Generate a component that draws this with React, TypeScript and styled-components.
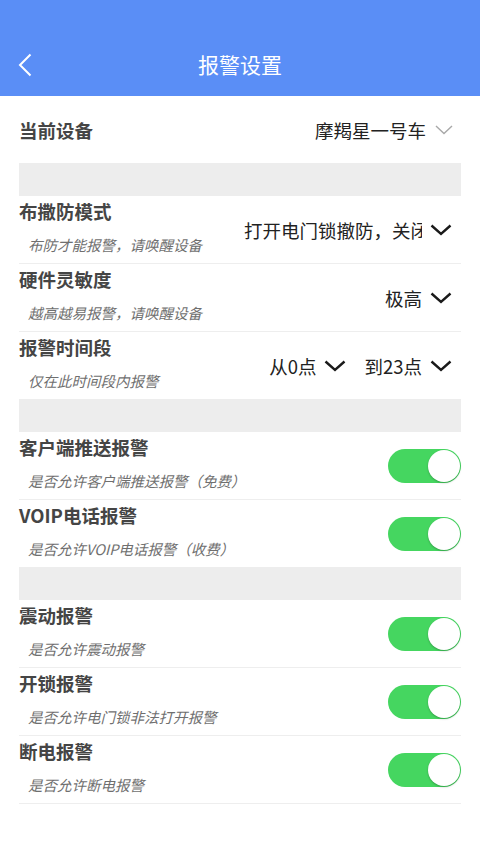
import React, { useState } from 'react';
import styled, { createGlobalStyle } from 'styled-components';

const GlobalStyle = createGlobalStyle`
  body {
    margin: 0;
    background: #ffffff;
    font-family: "Noto Sans CJK SC", "Noto Sans", sans-serif;
  }
`;

const Page = styled.div`
  width: 480px;
  min-height: 853px;
  background: #ffffff;
`;

const Header = styled.div`
  height: 96px;
  background-color: #5a8ef6;
  display: flex;
  align-items: flex-end;
  justify-content: center;
`;

const HeaderBar = styled.div`
  height: 64px;
  width: 100%;
  display: flex;
  align-items: center;
  justify-content: center;
  position: relative;
`;

const BackButton = styled.div`
  position: absolute;
  left: 18px;
  top: 20px;
  width: 18px;
  height: 26px;
  display: flex;
  align-items: center;
`;

const Title = styled.div`
  color: #ffffff;
  font-size: 21px;
  line-height: 28px;
`;

const Content = styled.div`
  padding: 0 19px;
`;

const Row = styled.div<{ $last?: boolean }>`
  height: 67px;
  display: flex;
  align-items: center;
  justify-content: space-between;
  border-bottom: ${(p) => (p.$last ? 'none' : '1px solid #eeeeee')};
`;

const Band = styled.div`
  height: 33px;
  background-color: #ededed;
`;

const LeftCol = styled.div`
  display: flex;
  flex-direction: column;
  align-self: stretch;
  padding-top: 2px;
`;

const Label = styled.div`
  font-size: 18.5px;
  line-height: 26px;
  font-weight: 700;
  color: #454545;
`;

const Sub = styled.div`
  font-size: 14.5px;
  line-height: 20px;
  color: #6f6f6f;
  font-style: italic;
  margin-top: 11px;
  padding-left: 9px;
`;

const RightGroup = styled.div`
  display: flex;
  align-items: center;
  gap: 18px;
  padding-right: 9px;
`;

const Picker = styled.div`
  display: flex;
  align-items: center;
  gap: 8px;
`;

const ValueText = styled.div<{ $max?: number }>`
  font-size: 18.5px;
  line-height: 26px;
  color: #222222;
  white-space: nowrap;
  overflow: hidden;
  max-width: ${(p) => (p.$max ? `${p.$max}px` : 'none')};
`;

const SwitchTrack = styled.button<{ $on: boolean }>`
  width: 73px;
  height: 34px;
  border-radius: 17px;
  border: none;
  padding: 0;
  background-color: ${(p) => (p.$on ? '#45d660' : '#e5e5e5')};
  position: relative;
  cursor: pointer;
  transition: background-color 0.2s;
`;

const SwitchKnob = styled.span<{ $on: boolean }>`
  position: absolute;
  top: 1px;
  left: ${(p) => (p.$on ? '40px' : '1px')};
  width: 32px;
  height: 32px;
  border-radius: 50%;
  background: #ffffff;
  box-shadow: 0 1px 2px rgba(0, 0, 0, 0.25);
  transition: left 0.2s;
`;

const Chevron: React.FC<{ light?: boolean }> = ({ light }) =>
  light ? (
    <svg width="18" height="10" viewBox="0 0 18 10">
      <path d="M1 1 L9 8.5 L17 1" fill="none" stroke="#a8a8a8" strokeWidth="1.4" />
    </svg>
  ) : (
    <svg width="22" height="12" viewBox="0 0 22 12">
      <path d="M1.5 1.5 L11 10 L20.5 1.5" fill="none" stroke="#1a1a1a" strokeWidth="2.4" />
    </svg>
  );

const Toggle: React.FC<{ initial?: boolean }> = ({ initial = true }) => {
  const [on, setOn] = useState(initial);
  return (
    <SwitchTrack $on={on} onClick={() => setOn(!on)}>
      <SwitchKnob $on={on} />
    </SwitchTrack>
  );
};

const DeviceLabel = styled(Label)`
  padding-top: 0;
`;

const DeviceRight = styled(Picker)`
  gap: 9px;
  padding-right: 8px;
`;

const switchRows1 = [
  { label: '客户端推送报警', sub: '是否允许客户端推送报警（免费）' },
  { label: 'VOIP电话报警', sub: '是否允许VOIP电话报警（收费）' },
];

const switchRows2 = [
  { label: '震动报警', sub: '是否允许震动报警' },
  { label: '开锁报警', sub: '是否允许电门锁非法打开报警' },
  { label: '断电报警', sub: '是否允许断电报警' },
];

const App: React.FC = () => {
  return (
    <Page>
      <GlobalStyle />
      <Header>
        <HeaderBar>
          <BackButton>
            <svg width="14" height="24" viewBox="0 0 14 24">
              <path d="M12.5 1.5 L2 12 L12.5 22.5" fill="none" stroke="#ffffff" strokeWidth="2" />
            </svg>
          </BackButton>
          <Title>报警设置</Title>
        </HeaderBar>
      </Header>
      <Content>
        <Row $last>
          <DeviceLabel>当前设备</DeviceLabel>
          <DeviceRight>
            <ValueText>摩羯星一号车</ValueText>
            <Chevron light />
          </DeviceRight>
        </Row>
        <Band />
        <Row>
          <LeftCol>
            <Label>布撒防模式</Label>
            <Sub>布防才能报警，请唤醒设备</Sub>
          </LeftCol>
          <RightGroup>
            <Picker>
              <ValueText $max={178}>打开电门锁撤防，关闭电门锁布防</ValueText>
              <Chevron />
            </Picker>
          </RightGroup>
        </Row>
        <Row>
          <LeftCol>
            <Label>硬件灵敏度</Label>
            <Sub>越高越易报警，请唤醒设备</Sub>
          </LeftCol>
          <RightGroup>
            <Picker>
              <ValueText>极高</ValueText>
              <Chevron />
            </Picker>
          </RightGroup>
        </Row>
        <Row $last>
          <LeftCol>
            <Label>报警时间段</Label>
            <Sub>仅在此时间段内报警</Sub>
          </LeftCol>
          <RightGroup>
            <Picker>
              <ValueText>从0点</ValueText>
              <Chevron />
            </Picker>
            <Picker>
              <ValueText>到23点</ValueText>
              <Chevron />
            </Picker>
          </RightGroup>
        </Row>
        <Band />
        {switchRows1.map((r, i) => (
          <Row key={r.label} $last={i === switchRows1.length - 1}>
            <LeftCol>
              <Label>{r.label}</Label>
              <Sub>{r.sub}</Sub>
            </LeftCol>
            <Toggle />
          </Row>
        ))}
        <Band />
        {switchRows2.map((r) => (
          <Row key={r.label}>
            <LeftCol>
              <Label>{r.label}</Label>
              <Sub>{r.sub}</Sub>
            </LeftCol>
            <Toggle />
          </Row>
        ))}
      </Content>
    </Page>
  );
};

export default App;
